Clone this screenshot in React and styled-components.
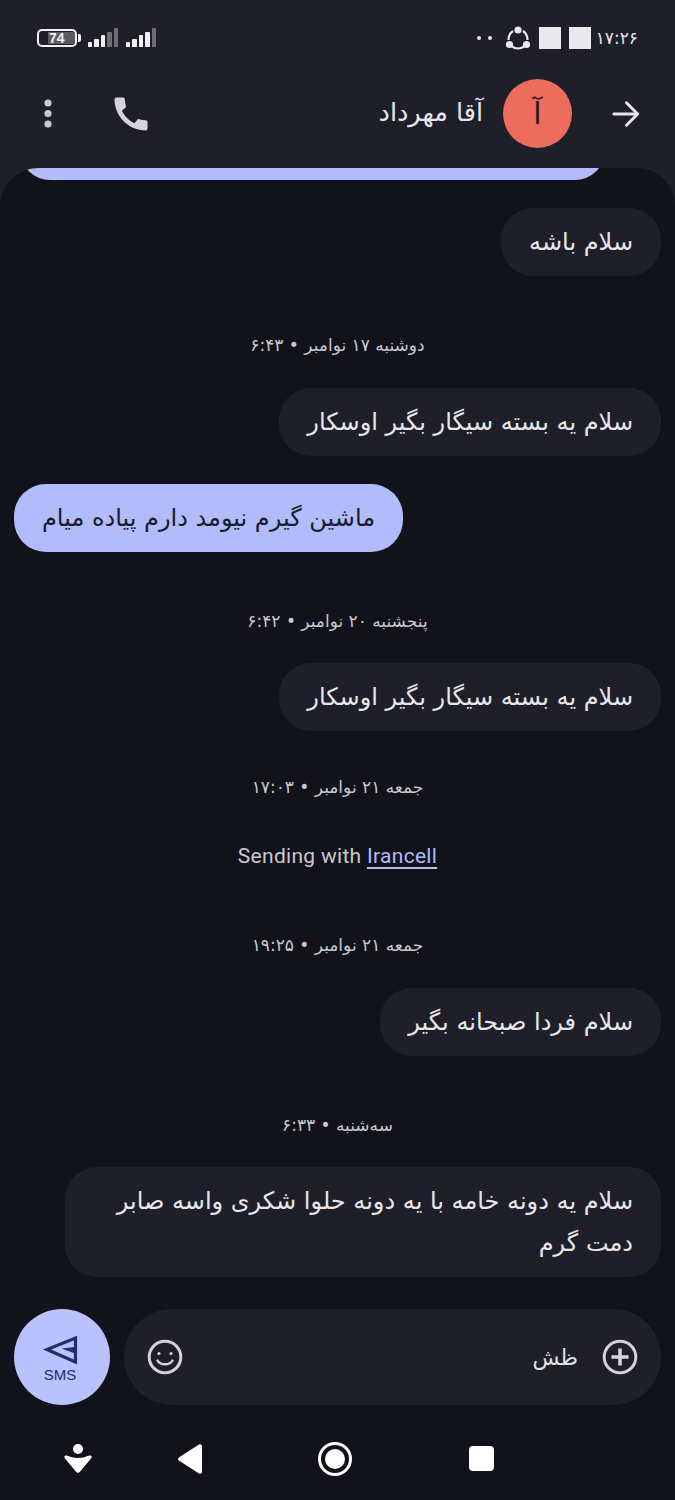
import React from 'react';
import styled, { createGlobalStyle } from 'styled-components';

const GlobalStyle = createGlobalStyle`
  html, body {
    margin: 0;
    padding: 0;
    background: #1f1f29;
  }
  * {
    box-sizing: border-box;
  }
`;

const Screen = styled.div`
  width: 675px;
  height: 1500px;
  background: #1f1f29;
  display: flex;
  flex-direction: column;
  overflow: hidden;
  font-family: "DejaVu Sans", sans-serif;
`;

const StatusBar = styled.div`
  height: 75px;
  display: flex;
  justify-content: space-between;
  align-items: center;
  padding: 0 37px 0 37px;
`;

const StatusGroup = styled.div`
  display: flex;
  align-items: center;
  gap: ${(p) => p.$gap || 8}px;
`;

const Battery = styled.div`
  width: 40px;
  height: 18px;
  border: 2px solid #f1f1f4;
  border-radius: 5px;
  display: flex;
  align-items: center;
  justify-content: flex-end;
  position: relative;
  margin-right: 3px;
  &::after {
    content: '';
    position: absolute;
    right: -6px;
    top: 3px;
    width: 3px;
    height: 8px;
    border-radius: 0 2px 2px 0;
    background: #f1f1f4;
  }
`;

const BatteryLevel = styled.span`
  width: 27px;
  height: 12px;
  background: #5b5b61;
  color: #f1f1f4;
  font-family: "Liberation Sans", sans-serif;
  font-size: 14px;
  font-weight: 700;
  line-height: 12px;
  padding-left: 1px;
`;

const Signal = styled.div`
  display: flex;
  align-items: flex-end;
  gap: 2px;
  height: 19px;
`;

const SignalBar = styled.span`
  width: 4.4px;
  height: ${(p) => p.$h}px;
  background: ${(p) => (p.$dim ? '#6d6d73' : '#f1f1f4')};
  border-radius: 1px 1px 0 0;
`;

const Dots = styled.div`
  display: flex;
  gap: 7px;
  margin-right: 5px;
`;

const Dot = styled.span`
  width: 4px;
  height: 4px;
  border-radius: 50%;
  background: #e6e6ea;
`;

const NotifSquare = styled.span`
  width: 22px;
  height: 22px;
  background: #e9e9ec;
`;

const Clock = styled.span`
  font-size: 17px;
  color: #e6e6ea;
  line-height: 22px;
  margin-left: -3px;
`;

const Header = styled.header`
  height: 93px;
  display: flex;
  align-items: flex-start;
  padding: 4px 35px 0 39px;
`;

const HeaderAction = styled.div`
  height: 69px;
  display: flex;
  align-items: center;
  margin-right: ${(p) => p.$right || 0}px;
`;

const ContactName = styled.div`
  flex: 1;
  height: 69px;
  line-height: 66px;
  text-align: right;
  color: #e6e6eb;
  font-size: 25.5px;
`;

const Avatar = styled.div`
  width: 69px;
  height: 69px;
  border-radius: 50%;
  background: #ee6c5e;
  color: #2a1518;
  font-size: 30px;
  display: flex;
  align-items: center;
  justify-content: center;
  margin: 0 40px 0 20px;
`;

const Panel = styled.main`
  flex: 1;
  background: #11121a;
  border-radius: 38px 38px 0 0;
  padding: 0 14px;
  display: flex;
  flex-direction: column;
  overflow: hidden;
`;

const Bubble = styled.div`
  align-self: ${(p) => (p.$mine ? 'flex-start' : 'flex-end')};
  margin-top: ${(p) => p.$top}px;
  padding: 13px 28px;
  border-radius: 32px;
  background: ${(p) => (p.$mine ? '#b2bbfb' : '#1f1f29')};
  color: ${(p) => (p.$mine ? '#191b2e' : '#e6e6eb')};
  font-size: 24px;
  line-height: 42px;
  direction: rtl;
  max-width: 596px;
`;

const ClippedBubble = styled.div`
  flex: none;
  width: 585px;
  height: 68px;
  margin: -56px 0 0 6px;
  border-radius: 30px;
  background: #b2bbfb;
`;

const DateLabel = styled.div`
  margin-top: ${(p) => p.$top}px;
  height: 24px;
  line-height: 24px;
  text-align: center;
  color: #c9c9cf;
  font-size: 17px;
  direction: rtl;
`;

const SimNote = styled.div`
  margin-top: 45px;
  height: 24px;
  line-height: 24px;
  text-align: center;
  color: #c9c9cf;
  font-family: Roboto, sans-serif;
  font-size: 21px;
  letter-spacing: 0.3px;
`;

const SimLink = styled.span`
  color: #b2bbfb;
  text-decoration: underline;
  text-underline-offset: 4px;
`;

const Composer = styled.div`
  flex: none;
  margin-top: 32px;
  display: flex;
  gap: 14px;
`;

const SendButton = styled.div`
  flex: none;
  width: 96px;
  height: 96px;
  border-radius: 50%;
  background: #b9c2fd;
  color: #232c6c;
  display: flex;
  flex-direction: column;
  align-items: center;
  justify-content: flex-start;
  padding: 25px 4px 0 0;
`;

const SendLabel = styled.span`
  font-family: "Liberation Sans", sans-serif;
  font-size: 15px;
  line-height: 16px;
  margin-top: 1px;
`;

const InputPill = styled.div`
  flex: 1;
  height: 96px;
  border-radius: 48px;
  background: #1f1f29;
  display: flex;
  align-items: center;
  justify-content: space-between;
  padding: 0 23px 0 23px;
`;

const InputRight = styled.div`
  display: flex;
  align-items: center;
  gap: 24px;
`;

const InputText = styled.span`
  color: #e0e0e6;
  font-size: 22px;
  direction: rtl;
`;

const NavBar = styled.nav`
  flex: none;
  height: 95px;
  margin: 0 -14px;
  padding: 37px 0 0 64px;
  display: flex;
  align-items: flex-start;
  gap: 116px;
`;

const NavLeft = styled.div`
  display: flex;
  align-items: center;
  height: 34px;
  gap: 86px;
`;

const NavSquare = styled.div`
  width: 25px;
  height: 25px;
  margin: 4px 0 0 1px;
  border-radius: 4px;
  background: #fff;
`;

const signalHeights = [5, 8, 12, 15, 19];

const ShareIcon = () => (
  <svg width="26" height="26" viewBox="0 0 26 26" fill="none">
    <path d="M8 6 C5 8 3.5 11 3.5 15" stroke="#e9e9ec" strokeWidth="2.2" />
    <path d="M18 6 C21 8 22.5 11 22.5 15" stroke="#e9e9ec" strokeWidth="2.2" />
    <path d="M7 21.5 C10.5 24 15.5 24 19 21.5" stroke="#e9e9ec" strokeWidth="2.2" />
    <circle cx="13" cy="5" r="3.6" fill="#e9e9ec" />
    <circle cx="4.5" cy="19.5" r="3.6" fill="#e9e9ec" />
    <circle cx="21.5" cy="19.5" r="3.6" fill="#e9e9ec" />
  </svg>
);

const MenuIcon = () => (
  <svg width="18" height="32" viewBox="0 0 18 32" fill="#c9c9d0">
    <circle cx="9" cy="5" r="3.6" />
    <circle cx="9" cy="15.5" r="3.6" />
    <circle cx="9" cy="26" r="3.6" />
  </svg>
);

const PhoneIcon = () => (
  <svg width="44" height="44" viewBox="0 0 24 24" fill="#d4d4da">
    <path d="M20.01 15.38c-1.23 0-2.42-.2-3.53-.56-.35-.12-.74-.03-1.01.24l-1.57 1.97c-2.83-1.35-5.48-3.9-6.89-6.83l1.95-1.66c.27-.28.35-.67.24-1.02-.37-1.11-.56-2.3-.56-3.53 0-.54-.45-.99-.99-.99H4.19C3.65 3 3 3.24 3 3.99 3 13.28 10.73 21 20.01 21c.71 0 .99-.63.99-1.18v-3.45c0-.54-.45-.99-.99-.99z" />
  </svg>
);

const ArrowIcon = () => (
  <svg width="28" height="28" viewBox="0 0 30 30" fill="none" stroke="#e6e6eb" strokeWidth="3.2" strokeLinecap="round" strokeLinejoin="round">
    <path d="M2 15 H27" />
    <path d="M15.5 3 L27.5 15 L15.5 27" />
  </svg>
);

const SendIcon = () => (
  <svg width="38" height="32" viewBox="0 0 38 32" fill="none" stroke="currentColor" strokeWidth="3.2" strokeLinejoin="miter">
    <path d="M34.5 4 V28 L6 15.5 Z" />
    <path d="M20.5 14.5 L34 13 V19.5 Z" fill="currentColor" stroke="none" />
  </svg>
);

const SmileIcon = () => (
  <svg width="36" height="36" viewBox="0 0 36 36" fill="none" stroke="#d2d2d8" strokeWidth="3">
    <circle cx="18" cy="18" r="15.8" />
    <circle cx="12" cy="14.5" r="1.6" fill="#d2d2d8" stroke="none" />
    <circle cx="24" cy="14.5" r="1.6" fill="#d2d2d8" stroke="none" />
    <path d="M10.5 21.5 C13 26.5 23 26.5 25.5 21.5" strokeLinecap="round" strokeWidth="2.4" />
  </svg>
);

const PlusIcon = () => (
  <svg width="36" height="36" viewBox="0 0 36 36" fill="none" stroke="#d2d2d8" strokeWidth="3">
    <circle cx="18" cy="18" r="15.8" />
    <path d="M9.5 18 H26.5 M18 9.5 V26.5" strokeWidth="3.6" />
  </svg>
);

const AssistIcon = () => (
  <svg width="28" height="30" viewBox="0 0 28 30" fill="#fff">
    <circle cx="14" cy="5" r="5" />
    <path d="M2.5 11.5 C6 12.5 9 14 14 14 C19 14 22 12.5 25.5 11.5 C27.5 11 28.5 13 27 14.6 L16 27.8 C15 29.2 13 29.2 12 27.8 L1 14.6 C-.5 13 .5 11 2.5 11.5 Z" />
  </svg>
);

const BackIcon = () => (
  <svg width="24" height="30" viewBox="0 0 24 30" fill="#fff">
    <path d="M21 .6 C22.6 -.2 24 .8 24 2.6 V27.4 C24 29.2 22.6 30.2 21 29.4 L1.2 16.8 C-.4 15.8 -.4 14.2 1.2 13.2 Z" />
  </svg>
);

const HomeIcon = () => (
  <svg width="34" height="34" viewBox="0 0 34 34" fill="none">
    <circle cx="17" cy="17" r="15.5" stroke="#fff" strokeWidth="3" />
    <circle cx="17" cy="17" r="10" fill="#fff" />
  </svg>
);

function App() {
  return (
    <Screen>
      <GlobalStyle />
      <StatusBar>
        <StatusGroup>
          <Battery>
            <BatteryLevel>74</BatteryLevel>
          </Battery>
          <Signal>
            {signalHeights.map((h, i) => (
              <SignalBar key={i} $h={h} $dim={i > 2} />
            ))}
          </Signal>
          <Signal>
            {signalHeights.map((h, i) => (
              <SignalBar key={i} $h={h} $dim={i > 3} />
            ))}
          </Signal>
        </StatusGroup>
        <StatusGroup>
          <Dots>
            <Dot />
            <Dot />
          </Dots>
          <ShareIcon />
          <NotifSquare />
          <NotifSquare />
          <Clock>۱۷:۲۶</Clock>
        </StatusGroup>
      </StatusBar>

      <Header>
        <HeaderAction $right={52}>
          <MenuIcon />
        </HeaderAction>
        <HeaderAction>
          <PhoneIcon />
        </HeaderAction>
        <ContactName>آقا مهرداد</ContactName>
        <Avatar>آ</Avatar>
        <HeaderAction>
          <ArrowIcon />
        </HeaderAction>
      </Header>

      <Panel>
        <ClippedBubble />
        <Bubble $top={28}>سلام باشه</Bubble>
        <DateLabel $top={57}>دوشنبه ۱۷ نوامبر • ۶:۴۳</DateLabel>
        <Bubble $top={31}>سلام یه بسته سیگار بگیر اوسکار</Bubble>
        <Bubble $mine $top={28}>ماشین گیرم نیومد دارم پیاده میام</Bubble>
        <DateLabel $top={57}>پنجشنبه ۲۰ نوامبر • ۶:۴۲</DateLabel>
        <Bubble $top={30}>سلام یه بسته سیگار بگیر اوسکار</Bubble>
        <DateLabel $top={44}>جمعه ۲۱ نوامبر • ۱۷:۰۳</DateLabel>
        <SimNote>
          Sending with <SimLink>Irancell</SimLink>
        </SimNote>
        <DateLabel $top={65}>جمعه ۲۱ نوامبر • ۱۹:۲۵</DateLabel>
        <Bubble $top={31}>سلام فردا صبحانه بگیر</Bubble>
        <DateLabel $top={57}>سه‌شنبه • ۶:۳۳</DateLabel>
        <Bubble $top={30}>سلام یه دونه خامه با یه دونه حلوا شکری واسه صابر دمت گرم</Bubble>

        <Composer>
          <SendButton>
            <SendIcon />
            <SendLabel>SMS</SendLabel>
          </SendButton>
          <InputPill>
            <SmileIcon />
            <InputRight>
              <InputText>ظش</InputText>
              <PlusIcon />
            </InputRight>
          </InputPill>
        </Composer>

        <NavBar>
          <NavLeft>
            <AssistIcon />
            <BackIcon />
          </NavLeft>
          <HomeIcon />
          <NavSquare />
        </NavBar>
      </Panel>
    </Screen>
  );
}

export default App;
